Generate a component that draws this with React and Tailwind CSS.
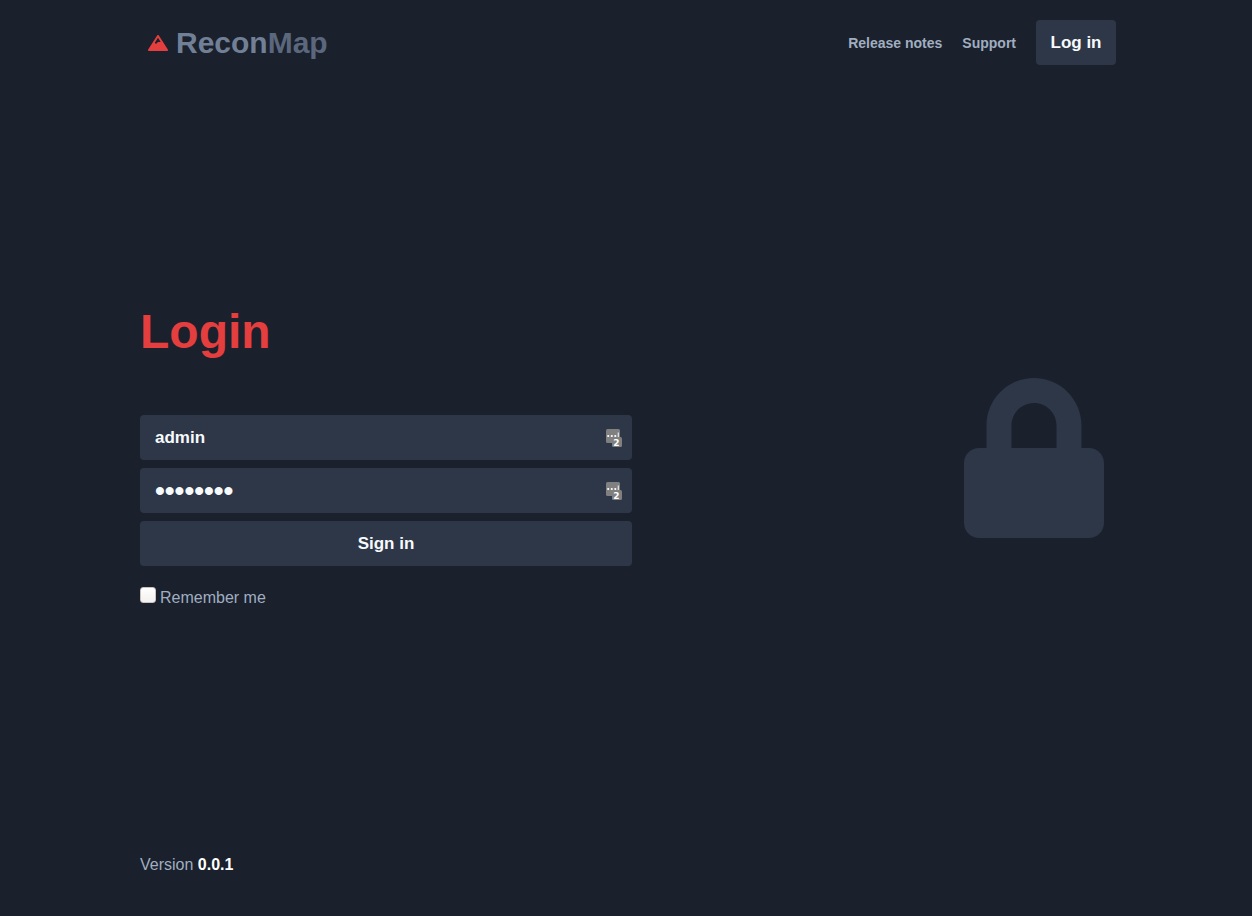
import { useState } from 'react';
import { FaLock, FaMountain } from 'react-icons/fa';

const fieldClass =
  'block h-[45px] w-full rounded bg-[#2d3748] pt-px pl-[15px] pr-10 font-bold text-[#f7fafc] outline-none focus-visible:ring-2 focus-visible:ring-[#718096]';

function FillBadge() {
  return (
    <svg
      aria-hidden="true"
      viewBox="0 0 16 18"
      className="pointer-events-none absolute right-[10px] top-[14px] h-[18px] w-4"
    >
      <rect width="14" height="14" rx="1.5" fill="#808080" />
      <circle cx="2.2" cy="7" r="1.1" fill="#fff" />
      <circle cx="5.8" cy="7" r="1.1" fill="#fff" />
      <circle cx="9.3" cy="7" r="1.1" fill="#fff" />
      <rect x="11.7" y="3.5" width="1.2" height="4.5" fill="#e4e4e4" />
      <rect x="6" y="8" width="10" height="10" rx="1.5" fill="#808080" />
      <text
        x="10.5"
        y="16.5"
        textAnchor="middle"
        fill="#fff"
        className="font-['DejaVu_Sans',sans-serif] text-[9px] font-bold"
      >
        2
      </text>
    </svg>
  );
}

function Field({ label, type, value, onChange, autoComplete, textSize }) {
  return (
    <div className="relative">
      <input
        aria-label={label}
        type={type}
        value={value}
        onChange={(event) => onChange(event.target.value)}
        autoComplete={autoComplete}
        className={`${fieldClass} ${textSize}`}
      />
      <FillBadge />
    </div>
  );
}

export default function App() {
  const [username, setUsername] = useState('admin');
  const [password, setPassword] = useState('password');

  return (
    <div className="flex min-h-screen flex-col bg-[#1a202c] px-4 font-['Liberation_Sans',Arial,sans-serif] text-base text-[#a0aec0]">
      <header className="mx-auto flex w-full max-w-[980px] items-center justify-between pt-5">
        <a href="#home" className="flex items-center gap-2 pl-3 text-3xl font-bold text-[#718096]">
          <FaMountain aria-hidden="true" className="h-4 w-5 text-[#e53e3e]" />
          <span>
            Recon<span className="text-[#5a677c]">Map</span>
          </span>
        </a>
        <nav className="flex items-center gap-5 text-sm font-bold">
          <a href="#releases">Release notes</a>
          <a href="#support">Support</a>
          <button
            type="button"
            className="h-[45px] w-20 rounded bg-[#2d3748] pt-px text-[17px] font-bold text-[#f7fafc]"
          >
            Log in
          </button>
        </nav>
      </header>

      <main className="mx-auto flex w-full max-w-[972px] flex-1 items-center justify-between gap-8 pb-[3px]">
        <form className="w-full max-w-[492px] pb-2" onSubmit={(event) => event.preventDefault()}>
          <h1 className="mb-12 text-5xl leading-[70px] font-bold text-[#e53e3e]">Login</h1>
          <div className="flex flex-col gap-2">
            <Field
              label="Username"
              type="text"
              value={username}
              onChange={setUsername}
              autoComplete="username"
              textSize="text-[17px]"
            />
            <Field
              label="Password"
              type="password"
              value={password}
              onChange={setPassword}
              autoComplete="current-password"
              textSize="text-[28px]"
            />
            <button
              type="submit"
              className="h-[45px] rounded bg-[#2d3748] text-[17px] font-bold text-[#f7fafc]"
            >
              Sign in
            </button>
          </div>
          <label className="mt-5 flex w-fit gap-1">
            <input
              type="checkbox"
              className="mt-px size-4 appearance-none rounded-[3px] border border-[#c8c3bc] bg-linear-to-b from-white to-[#f3f1ee] checked:bg-[#e53e3e] checked:bg-none"
            />
            <span>Remember me</span>
          </label>
        </form>
        <FaLock aria-hidden="true" className="mr-2 h-40 w-[140px] shrink-0 text-[#2d3748]" />
      </main>

      <footer className="mx-auto w-full max-w-[972px] pb-[39px]">
        Version <strong className="text-white">0.0.1</strong>
      </footer>
    </div>
  );
}
